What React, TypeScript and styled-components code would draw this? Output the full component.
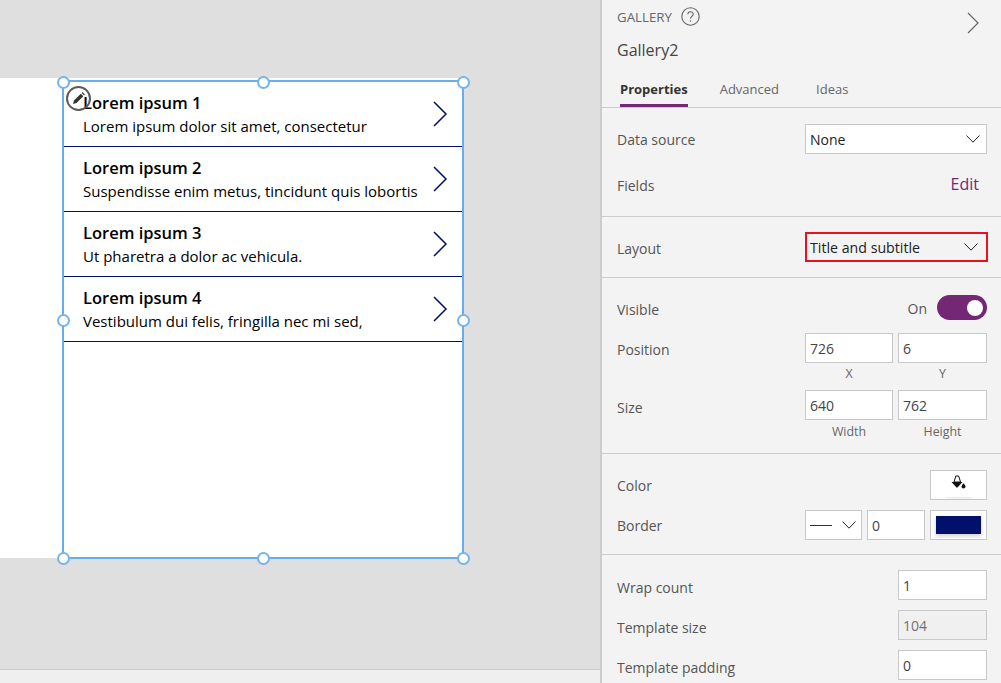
import styled, { createGlobalStyle } from "styled-components";

const GlobalStyle = createGlobalStyle`
  html, body {
    margin: 0;
    padding: 0;
    height: 100%;
    overflow: hidden;
    font-family: "Open Sans", "Noto Sans", sans-serif;
  }
  * { box-sizing: border-box; }
`;

const Page = styled.div`
  display: flex;
  width: 1001px;
  height: 683px;
  overflow: hidden;
`;

const Canvas = styled.div`
  width: 600px;
  height: 100%;
  display: flex;
  flex-direction: column;
  background: #dfdfdf;
`;

const Stage = styled.div`
  flex: 1;
  padding-top: 78px;
`;

const StatusBar = styled.div`
  height: 14px;
  background: #efefef;
  border-top: 1px solid #cccccc;
`;

const Screen = styled.div`
  width: 464px;
  height: 480px;
  background: #ffffff;
  padding: 2px 0 0 62px;
`;

const Frame = styled.div`
  position: relative;
  width: 402px;
  height: 479px;
  border: 2px solid #66ade9;
`;

const EditBadge = styled.div`
  position: absolute;
  left: 2px;
  top: 4px;
  width: 25px;
  height: 25px;
  border-radius: 50%;
  border: 2px solid #5a5a5a;
  display: flex;
  align-items: center;
  justify-content: center;
`;

const handleX = { start: "-7.5px", mid: "calc(50% - 6.5px)", end: "calc(100% - 5.5px)" };
const handleY = { start: "-6.5px", mid: "calc(50% - 6px)", end: "calc(100% - 5.5px)" };

const Handle = styled.span<{ $x: keyof typeof handleX; $y: keyof typeof handleY }>`
  position: absolute;
  left: ${(p) => handleX[p.$x]};
  top: ${(p) => handleY[p.$y]};
  width: 13px;
  height: 13px;
  border-radius: 50%;
  background: #ffffff;
  border: 2px solid #74b4ec;
`;

const ItemRow = styled.div`
  height: 65px;
  padding-left: 19px;
  border-bottom: 1px solid #00106b;
  display: flex;
  align-items: center;
  justify-content: space-between;
`;

const ItemText = styled.div`
  display: flex;
  flex-direction: column;
`;

const ItemTitle = styled.div`
  font-size: 16.5px;
  font-weight: 600;
  line-height: 24px;
  color: #000000;
`;

const ItemSub = styled.div`
  font-size: 15px;
  line-height: 24px;
  margin-top: -1px;
  color: #000000;
  white-space: nowrap;
`;

const ItemChevron = styled.svg`
  width: 16px;
  height: 26px;
  margin-right: 14px;
  flex: none;
`;

const Panel = styled.aside`
  width: 401px;
  height: 100%;
  background: #f3f3f3;
  border-left: 2px solid #cccccc;
  color: #555555;
  font-size: 14px;
  overflow: hidden;
`;

const Header = styled.header`
  height: 108px;
  padding: 0 0 0 15px;
  border-bottom: 1px solid #cccccc;
  display: flex;
  flex-direction: column;
`;

const HeaderTop = styled.div`
  height: 33px;
  display: flex;
  align-items: center;
  gap: 9px;
  font-size: 13.3px;
  color: #666666;
`;

const CloseChevron = styled.svg`
  width: 14px;
  height: 22px;
  margin-left: auto;
  margin-right: 21px;
  margin-top: 12px;
`;

const Name = styled.div`
  font-size: 16px;
  line-height: 22px;
  margin-top: 6px;
  color: #444444;
`;

const Tabs = styled.div`
  display: flex;
  gap: 32px;
  margin-top: 17px;
  padding-left: 3px;
`;

const Tab = styled.div<{ $active?: boolean; $right?: number }>`
  height: 29px;
  line-height: 18px;
  padding-top: 2px;
  padding-right: ${(p) => p.$right ?? 0}px;
  font-size: 13px;
  font-weight: ${(p) => (p.$active ? 700 : 400)};
  color: ${(p) => (p.$active ? "#333333" : "#666666")};
  border-bottom: ${(p) => (p.$active ? "3px solid #742774" : "none")};
`;

const Section = styled.section<{ $top: number; $bottom: number; $gap?: number; $last?: boolean }>`
  padding: ${(p) => p.$top}px 14px ${(p) => p.$bottom}px 15px;
  display: flex;
  flex-direction: column;
  gap: ${(p) => p.$gap ?? 0}px;
  border-bottom: ${(p) => (p.$last ? "none" : "1px solid #cccccc")};
`;

const Row = styled.div<{ $height?: number }>`
  height: ${(p) => p.$height ?? 30}px;
  display: flex;
  align-items: center;
  justify-content: space-between;
`;

const Label = styled.span<{ $top?: number }>`
  font-size: 14px;
  padding-top: ${(p) => p.$top ?? 2}px;
  color: #555555;
`;

const Controls = styled.div<{ $gap?: number }>`
  display: flex;
  gap: ${(p) => p.$gap ?? 5}px;
  align-items: center;
`;

const Field = styled.div<{ $width: number; $disabled?: boolean }>`
  width: ${(p) => p.$width}px;
  height: 30px;
  padding: 0 4px;
  display: flex;
  align-items: center;
  background: ${(p) => (p.$disabled ? "#f0f0f0" : "#ffffff")};
  border: 1px solid #c8c8c8;
  font-size: 14px;
  color: ${(p) => (p.$disabled ? "#707070" : "#444444")};
`;

const Select = styled.div<{ $width: number; $alert?: boolean; $right?: number }>`
  width: ${(p) => p.$width}px;
  height: 30px;
  padding: 0 ${(p) => p.$right ?? 6}px 0 ${(p) => (p.$alert ? 3 : 4)}px;
  margin-right: ${(p) => (p.$alert ? -1 : 0)}px;
  display: flex;
  align-items: center;
  justify-content: space-between;
  background: ${(p) => (p.$alert ? "transparent" : "#ffffff")};
  border: ${(p) => (p.$alert ? "2px solid #e81123" : "1px solid #c8c8c8")};
  font-size: ${(p) => (p.$alert ? 14.2 : 14)}px;
  color: #222222;
`;

const Dash = styled.span`
  width: 22px;
  height: 1px;
  background: #333333;
`;

const Caret = styled.svg`
  width: 14px;
  height: 8px;
  flex: none;
`;

const EditLink = styled.span`
  font-size: 16px;
  color: #742774;
  margin-right: 8px;
  margin-top: -3px;
`;

const Toggle = styled.div`
  width: 50px;
  height: 25px;
  border-radius: 13px;
  background: #742774;
  display: flex;
  align-items: center;
  justify-content: flex-end;
  padding-right: 4px;
`;

const Knob = styled.span`
  width: 16px;
  height: 16px;
  border-radius: 50%;
  background: #ffffff;
`;

const OnText = styled.span`
  font-size: 14px;
  padding-top: 2px;
  color: #555555;
`;

const FieldGroup = styled.div<{ $top: number }>`
  display: flex;
  flex-direction: column;
  margin-top: ${(p) => p.$top}px;
`;

const Caption = styled.div<{ $width: number }>`
  width: ${(p) => p.$width}px;
  height: 21px;
  line-height: 21px;
  text-align: center;
  font-size: 12.4px;
  color: #666666;
`;

const Swatch = styled.div`
  width: 57px;
  height: 30px;
  background: #ffffff;
  border: 1px solid #c8c8c8;
  display: flex;
  align-items: center;
  justify-content: center;
`;

const ColorChip = styled.div`
  width: 45px;
  height: 18px;
  background: #00106b;
  box-shadow: 0 2px 4px rgba(0, 0, 0, 0.2);
`;

const BucketChip = styled.div`
  width: 30px;
  height: 24px;
  display: flex;
  justify-content: center;
  padding-top: 2px;
  box-shadow: 0 3px 3px -2px rgba(0, 0, 0, 0.12);
`;

const items = [
  { title: "Lorem ipsum 1", sub: "Lorem ipsum dolor sit amet, consectetur" },
  { title: "Lorem ipsum 2", sub: "Suspendisse enim metus, tincidunt quis lobortis" },
  { title: "Lorem ipsum 3", sub: "Ut pharetra a dolor ac vehicula." },
  { title: "Lorem ipsum 4", sub: "Vestibulum dui felis, fringilla nec mi sed," },
];

const handles = [
  ["start", "start"],
  ["mid", "start"],
  ["end", "start"],
  ["start", "mid"],
  ["end", "mid"],
  ["start", "end"],
  ["mid", "end"],
  ["end", "end"],
] as const;

function CaretIcon() {
  return (
    <Caret viewBox="0 0 14 8">
      <path d="M0.5 0.5 L7 7.2 L13.5 0.5" fill="none" stroke="#222" strokeWidth="1" />
    </Caret>
  );
}

export default function App() {
  return (
    <>
      <GlobalStyle />
      <Page>
        <Canvas>
          <Stage>
            <Screen>
              <Frame>
                {items.map((item) => (
                  <ItemRow key={item.title}>
                    <ItemText>
                      <ItemTitle>{item.title}</ItemTitle>
                      <ItemSub>{item.sub}</ItemSub>
                    </ItemText>
                    <ItemChevron viewBox="0 0 16 26">
                      <path d="M2 1 L14 13 L2 25" fill="none" stroke="#00106b" strokeWidth="1.5" />
                    </ItemChevron>
                  </ItemRow>
                ))}
                <EditBadge>
                  <svg width="15" height="15" viewBox="0 0 15 15">
                    <path d="M2 13 L3 9.5 L9.8 2.7 L12.3 5.2 L5.5 12 Z" fill="#333" />
                    <path d="M10.6 1.9 L11.4 1.1 L13.9 3.6 L13.1 4.4 Z" fill="#333" />
                  </svg>
                </EditBadge>
                {handles.map(([x, y]) => (
                  <Handle key={x + y} $x={x} $y={y} />
                ))}
              </Frame>
            </Screen>
          </Stage>
          <StatusBar />
        </Canvas>
        <Panel>
          <Header>
            <HeaderTop>
              <span>GALLERY</span>
              <svg width="19" height="19" viewBox="0 0 19 19">
                <circle cx="9.5" cy="9.5" r="8.7" fill="none" stroke="#666" strokeWidth="1.1" />
                <path d="M6.8 7.3 C6.8 3.9 12.2 3.9 12.2 7.2 C12.2 9.3 9.5 9.2 9.5 11.7" fill="none" stroke="#666" strokeWidth="1.1" />
                <circle cx="9.5" cy="14" r="0.8" fill="#666" />
              </svg>
              <CloseChevron viewBox="0 0 14 22">
                <path d="M2 1 L12 11 L2 21" fill="none" stroke="#666" strokeWidth="1.2" />
              </CloseChevron>
            </HeaderTop>
            <Name>Gallery2</Name>
            <Tabs>
              <Tab $active>Properties</Tab>
              <Tab $right={5}>Advanced</Tab>
              <Tab>Ideas</Tab>
            </Tabs>
          </Header>

          <Section $top={16} $bottom={16} $gap={16}>
            <Row>
              <Label $top={0}>Data source</Label>
              <Select $width={182}>
                None
                <CaretIcon />
              </Select>
            </Row>
            <Row>
              <Label $top={0}>Fields</Label>
              <EditLink>Edit</EditLink>
            </Row>
          </Section>

          <Section $top={15} $bottom={15}>
            <Row>
              <Label>Layout</Label>
              <Select $width={183} $alert $right={8}>
                Title and subtitle
                <CaretIcon />
              </Select>
            </Row>
          </Section>

          <Section $top={17} $bottom={10}>
            <Row $height={25}>
              <Label $top={4}>Visible</Label>
              <Controls $gap={10}>
                <OnText>On</OnText>
                <Toggle>
                  <Knob />
                </Toggle>
              </Controls>
            </Row>
            <FieldGroup $top={13}>
              <Row>
                <Label>Position</Label>
                <Controls>
                  <Field $width={88}>726</Field>
                  <Field $width={89}>6</Field>
                </Controls>
              </Row>
              <Row $height={21}>
                <span />
                <Controls>
                  <Caption $width={88}>X</Caption>
                  <Caption $width={89}>Y</Caption>
                </Controls>
              </Row>
            </FieldGroup>
            <FieldGroup $top={6}>
              <Row>
                <Label $top={4}>Size</Label>
                <Controls>
                  <Field $width={88}>640</Field>
                  <Field $width={89}>762</Field>
                </Controls>
              </Row>
              <Row $height={23}>
                <span />
                <Controls>
                  <Caption $width={88}>Width</Caption>
                  <Caption $width={89}>Height</Caption>
                </Controls>
              </Row>
            </FieldGroup>
          </Section>

          <Section $top={16} $bottom={14} $gap={10}>
            <Row>
              <Label $top={0}>Color</Label>
              <Swatch>
                <BucketChip>
                  <svg width="16" height="15" viewBox="0 0 16 15">
                    <path d="M4.8 1 H7.6 L9.6 7 H3 Z" fill="#fff" stroke="#111" strokeWidth="1" />
                    <path d="M0.5 7 H11.5 L6.5 12.5 H5.5 Z" fill="#111" />
                    <circle cx="12.5" cy="11.5" r="2" fill="#111" />
                    <path d="M12.5 8 L11 10.5 H14 Z" fill="#111" />
                  </svg>
                </BucketChip>
              </Swatch>
            </Row>
            <Row>
              <Label $top={0}>Border</Label>
              <Controls>
                <Select $width={57} $right={5}>
                  <Dash />
                  <CaretIcon />
                </Select>
                <Field $width={58}>0</Field>
                <Swatch>
                  <ColorChip />
                </Swatch>
              </Controls>
            </Row>
          </Section>

          <Section $top={15} $bottom={0} $gap={10} $last>
            <Row>
              <Label $top={4}>Wrap count</Label>
              <Field $width={89}>1</Field>
            </Row>
            <Row>
              <Label $top={4}>Template size</Label>
              <Field $width={89} $disabled>104</Field>
            </Row>
            <Row>
              <Label $top={4}>Template padding</Label>
              <Field $width={89}>0</Field>
            </Row>
          </Section>
        </Panel>
      </Page>
    </>
  );
}
